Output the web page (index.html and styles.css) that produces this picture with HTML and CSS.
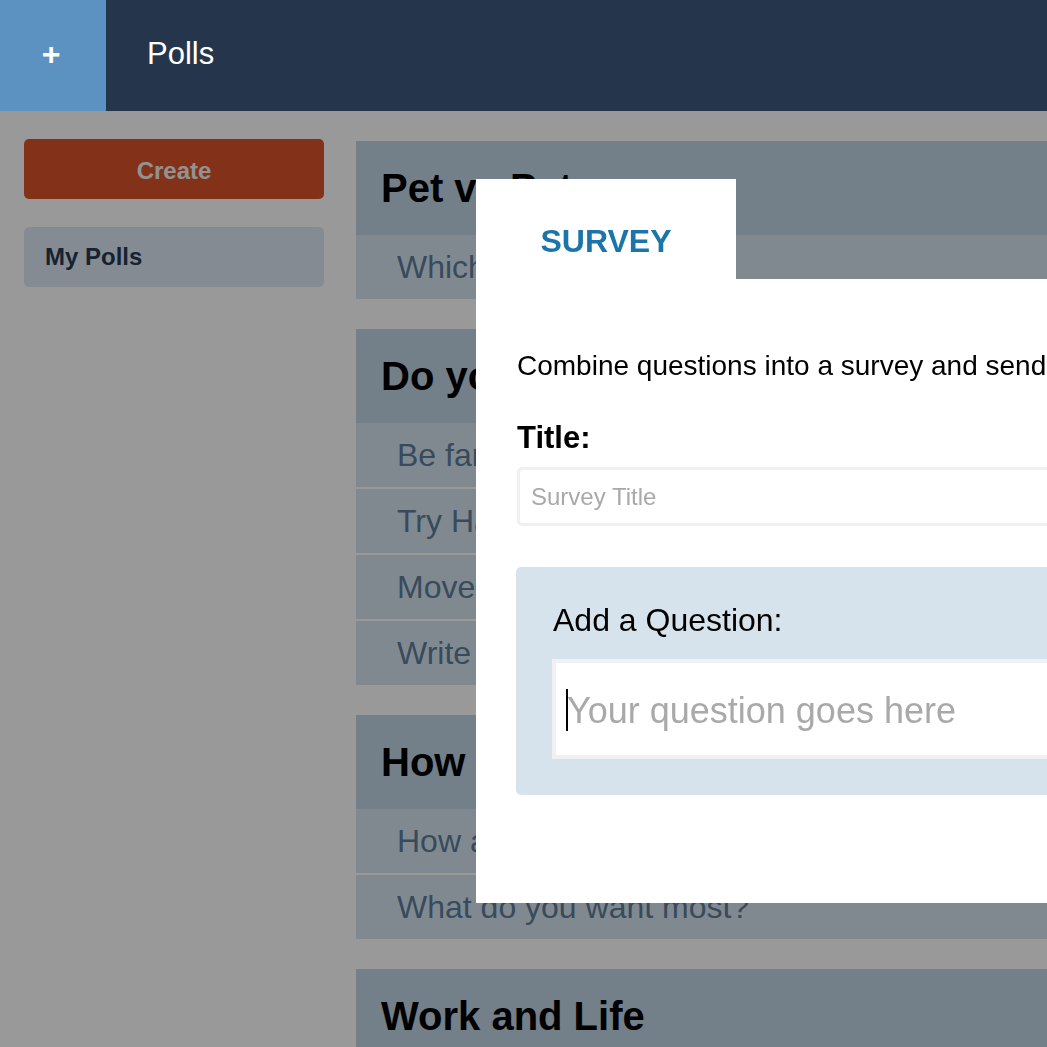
FILE: index.html
```html
<!DOCTYPE html>
<html lang="en">
<head>
<meta charset="utf-8">
<title>Polls</title>
<link rel="stylesheet" href="styles.css">
</head>
<body>
<header class="topbar">
  <div class="add-tab">+</div>
  <h1 class="brand">Polls</h1>
</header>

<div class="layout">
  <aside class="sidebar">
    <button class="create-btn">Create</button>
    <nav class="side-nav">
      <div class="side-item">My Polls</div>
    </nav>
  </aside>

  <main class="polls">
    <section class="poll-card">
      <h2 class="poll-title">Pet vs Pet</h2>
      <ul class="poll-items">
        <li class="poll-item">Which pet is the best?</li>
      </ul>
    </section>
    <section class="poll-card">
      <h2 class="poll-title">Do you dare?</h2>
      <ul class="poll-items">
        <li class="poll-item">Be famous or rich?</li>
        <li class="poll-item">Try Harder</li>
        <li class="poll-item">Move abroad</li>
        <li class="poll-item">Write a book</li>
      </ul>
    </section>
    <section class="poll-card">
      <h2 class="poll-title">How are things?</h2>
      <ul class="poll-items">
        <li class="poll-item">How are you feeling today?</li>
        <li class="poll-item">What do you want most?</li>
      </ul>
    </section>
    <section class="poll-card">
      <h2 class="poll-title">Work and Life</h2>
      <ul class="poll-items">
        <li class="poll-item">Balance</li>
      </ul>
    </section>
  </main>
</div>

<div class="overlay"></div>

<div class="modal">
  <div class="modal-tabs">
    <div class="modal-tab">SURVEY</div>
  </div>
  <div class="modal-body">
    <p class="modal-desc">Combine questions into a survey and send it to your friends.</p>
    <label class="field-label" for="survey-title">Title:</label>
    <input id="survey-title" class="title-input" type="text" placeholder="Survey Title">
    <div class="question-box">
      <div class="question-label">Add a Question:</div>
      <div class="question-field">
        <input class="question-input" type="text" placeholder="Your question goes here">
        <span class="caret"></span>
      </div>
    </div>
  </div>
</div>
</body>
</html>
```

FILE: styles.css
```css
* { box-sizing: border-box; }

html, body {
  margin: 0;
  padding: 0;
  overflow: hidden;
  height: 100%;
}

body {
  font-family: "Liberation Sans", Arial, Helvetica, sans-serif;
  background: #ffffff;
  color: #000;
}

.topbar {
  position: relative;
  z-index: 20;
  display: flex;
  align-items: center;
  height: 111px;
  background: #25354b;
}

.add-tab {
  width: 106px;
  height: 111px;
  background: #5c92c1;
  color: #fff;
  font-size: 32px;
  font-weight: bold;
  display: flex;
  align-items: center;
  justify-content: center;
  padding: 0 4px 2px 0;
}

.brand {
  margin: 0 0 4px 41px;
  font-size: 31px;
  font-weight: normal;
  color: #fff;
}

.layout {
  display: flex;
  gap: 32px;
  padding: 28px 0 0 24px;
}

.sidebar {
  width: 300px;
  flex-shrink: 0;
  display: flex;
  flex-direction: column;
  gap: 28px;
}

.create-btn {
  height: 60px;
  border: none;
  border-radius: 5px;
  background: #dc522b;
  color: #f4f4f4;
  font-family: inherit;
  font-size: 24px;
  font-weight: bold;
  padding: 3px 0 0 0;
}

.side-item {
  height: 60px;
  border-radius: 5px;
  background: #dee8f3;
  color: #273a52;
  font-size: 24px;
  font-weight: bold;
  display: flex;
  align-items: center;
  padding-left: 21px;
}

.polls {
  width: 900px;
  flex-shrink: 0;
  margin-top: 2px;
  display: flex;
  flex-direction: column;
  gap: 30px;
}

.poll-title {
  margin: 0;
  height: 94px;
  background: #c0d4e4;
  font-size: 40px;
  font-weight: bold;
  display: flex;
  align-items: center;
  padding: 0 0 0 25px;
}

.poll-items {
  list-style: none;
  margin: 0;
  padding: 0;
}

.poll-item {
  height: 64px;
  background: #d8e5f1;
  color: #5d7d99;
  font-size: 32px;
  display: flex;
  align-items: center;
  padding-left: 41px;
}

.poll-item + .poll-item {
  border-top: 2px solid #ffffff;
  height: 66px;
}

.overlay {
  position: fixed;
  inset: 0;
  z-index: 10;
  background: rgba(0, 0, 0, 0.4);
}

.modal {
  position: absolute;
  z-index: 30;
  left: 476px;
  top: 179px;
  width: 820px;
}

.modal-tabs {
  display: flex;
}

.modal-tab {
  width: 260px;
  height: 100px;
  background: #fff;
  color: #1b75a9;
  font-size: 32px;
  font-weight: bold;
  line-height: 32px;
  text-align: center;
  padding-top: 46px;
}

.modal-body {
  background: #fff;
  height: 624px;
  padding: 71px 40px 0 40px;
}

.modal-desc {
  margin: 0;
  font-size: 28px;
  line-height: 32px;
  white-space: nowrap;
  padding-left: 1px;
}

.field-label {
  display: block;
  margin-top: 39px;
  font-size: 31px;
  font-weight: bold;
  line-height: 34px;
  padding-left: 1px;
}

.title-input {
  display: block;
  width: 100%;
  height: 59px;
  margin-top: 12px;
  margin-left: 1px;
  border: 3px solid #f0f0f0;
  border-radius: 5px;
  padding: 0 11px;
  font-family: inherit;
  font-size: 24px;
  outline: none;
}

.title-input::placeholder {
  color: #a9a9a9;
}

.question-box {
  margin-top: 41px;
  background: #d7e3ec;
  border-radius: 5px;
  padding: 35px 0 36px 36px;
}

.question-label {
  font-size: 32px;
  line-height: 36px;
  padding-left: 1px;
}

.question-field {
  position: relative;
  margin-top: 21px;
}

.question-input {
  display: block;
  width: 100%;
  height: 100px;
  border: 4px solid #f1f1f1;
  background: #fff;
  padding: 4px 11px 0 11px;
  font-family: inherit;
  font-size: 36px;
  outline: none;
}

.question-input::placeholder {
  color: #a9a9a9;
}

.caret {
  position: absolute;
  left: 14px;
  top: 30px;
  width: 2px;
  height: 42px;
  background: #000;
}
```
